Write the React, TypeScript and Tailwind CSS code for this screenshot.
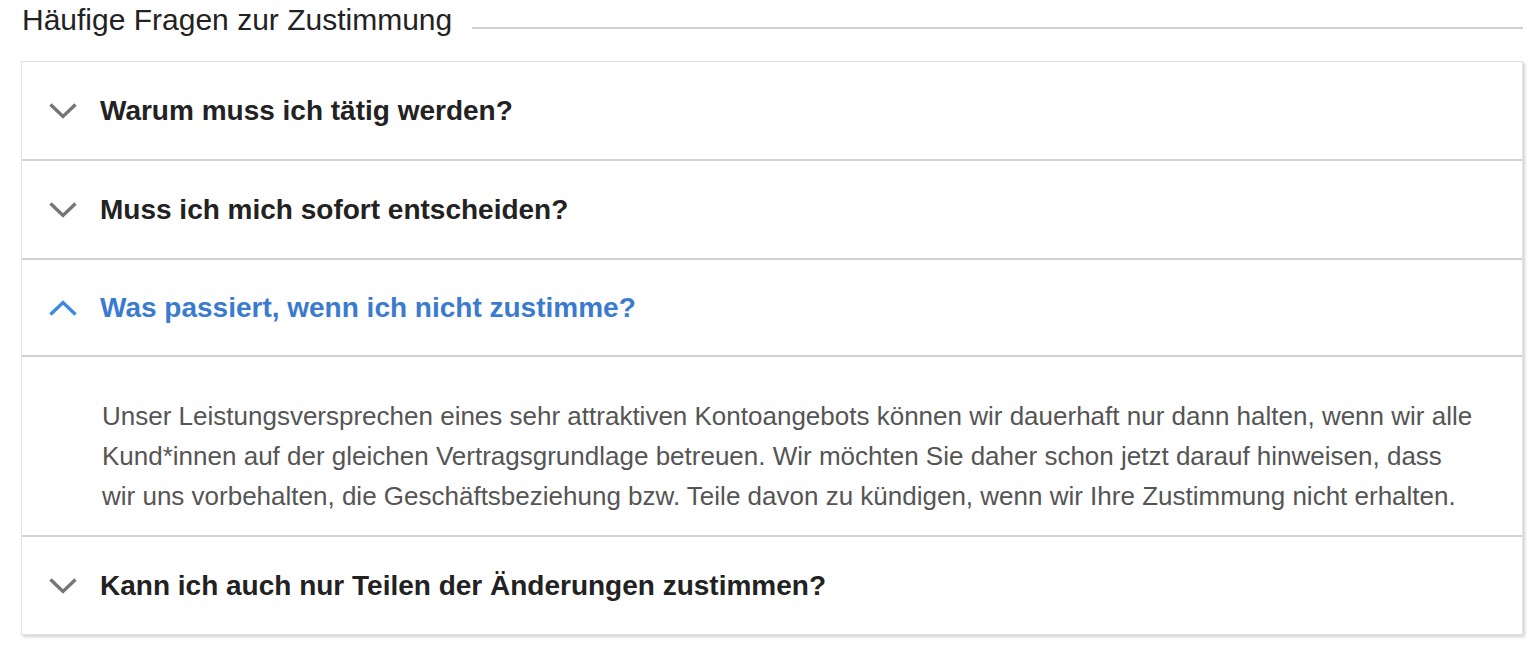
import { useState } from 'react'

const faqs = [
  { q: 'Warum muss ich tätig werden?', a: [] as string[] },
  { q: 'Muss ich mich sofort entscheiden?', a: [] as string[] },
  {
    q: 'Was passiert, wenn ich nicht zustimme?',
    a: [
      'Unser Leistungsversprechen eines sehr attraktiven Kontoangebots können wir dauerhaft nur dann halten, wenn wir alle',
      'Kund*innen auf der gleichen Vertragsgrundlage betreuen. Wir möchten Sie daher schon jetzt darauf hinweisen, dass',
      'wir uns vorbehalten, die Geschäftsbeziehung bzw. Teile davon zu kündigen, wenn wir Ihre Zustimmung nicht erhalten.',
    ],
  },
  { q: 'Kann ich auch nur Teilen der Änderungen zustimmen?', a: [] as string[] },
]

function Chevron({ open }: { open: boolean }) {
  return (
    <svg width="30" height="18" viewBox="0 0 30 18" className={open ? 'text-[#3d8ae0]' : 'text-[#767676]'}>
      <polyline
        points={open ? '2.5,15.5 15,3.5 27.5,15.5' : '2.5,2.5 15,14.5 27.5,2.5'}
        fill="none"
        stroke="currentColor"
        strokeWidth="3.4"
      />
    </svg>
  )
}

export default function App() {
  const [open, setOpen] = useState(2)

  return (
    <div className="min-h-[662px] bg-white pl-[21px] pr-[17px] [font-family:'Liberation_Sans',Arial,sans-serif]">
      <div className="flex items-start">
        <h2 className="pl-px text-[30px] leading-[40px] text-[#222]">Häufige Fragen zur Zustimmung</h2>
        <div className="ml-[20px] mt-[27px] h-[2px] flex-1 bg-[#cfcfcf]" />
      </div>

      <div className="mt-[21px] border border-[#e2e2e2] bg-white shadow-[2px_2px_3px_rgba(0,0,0,0.18)]">
        {faqs.map((item, i) => {
          const isOpen = open === i
          return (
            <div key={item.q} className={i < faqs.length - 1 ? 'border-b-2 border-[#d2d2d2]' : ''}>
              <button
                type="button"
                onClick={() => setOpen(isOpen ? -1 : i)}
                className={
                  'flex h-[97px] w-full items-center gap-[22px] pl-[26px] text-left text-[28px] font-bold ' +
                  (isOpen ? 'border-b-2 border-[#d2d2d2] text-[#3a7bcf]' : 'text-[#222]')
                }
              >
                <Chevron open={isOpen} />
                <span>{item.q}</span>
              </button>
              {isOpen && item.a.length > 0 && (
                <p className="pb-[19px] pl-[80px] pr-[14px] pt-[39px] text-[26px] leading-[40px] text-[#555]">
                  {item.a.map((line, j) => (
                    <span key={j} className="block whitespace-nowrap">
                      {line}
                    </span>
                  ))}
                </p>
              )}
            </div>
          )
        })}
      </div>
    </div>
  )
}
